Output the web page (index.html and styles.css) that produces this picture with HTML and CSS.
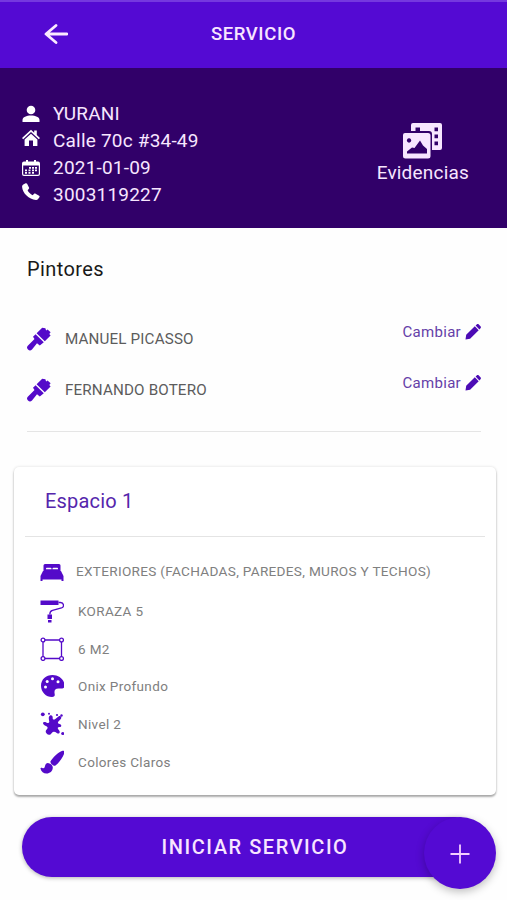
FILE: index.html
```html
<!DOCTYPE html>
<html lang="es">
<head>
    <meta charset="UTF-8">
    <meta name="viewport" content="width=device-width, initial-scale=1.0">
    <title>Servicio</title>
    <link rel="stylesheet" href="styles.css">
</head>
<body>
    <header class="toolbar">
        <svg class="back" viewBox="0 0 24 20"><path d="M12 1.500L2 10l10 8.500M2.500 10H23"/></svg>
        <h1>SERVICIO</h1>
    </header>

    <section class="client">
        <ul class="client-data">
            <li>
                <svg viewBox="0 0 18 18"><circle cx="9" cy="5" r="4.300"/><path d="M.5 17v-2c0-3 4-4.500 8.500-4.500s8.500 1.500 8.500 4.500v2z"/></svg>
                <span>YURANI</span>
            </li>
            <li>
                <svg class="up" viewBox="0 0 18 18"><path d="M0 9L9 .8l3.200 2.900V1.500h2.600V6L18 9l-1.200 1.200L9 3.100l-7.800 7.100z"/><path d="M2.600 10.500L9 4.700l6.400 5.800V17H11v-5.500H7V17H2.600z"/></svg>
                <span>Calle 70c #34-49</span>
            </li>
            <li>
                <svg viewBox="0 0 18 18"><path fill-rule="evenodd" d="M2 2.500h2V1h2v1.500h6V1h2v1.500h2a2 2 0 0 1 2 2V15a2 2 0 0 1-2 2H2a2 2 0 0 1-2-2V4.500a2 2 0 0 1 2-2zM1.200 6.500V15a.8.8 0 0 0 .8.800h14a.8.8 0 0 0 .8-.8V6.500z"/><path d="M7 8h2v1.700H7zM10 8h2v1.700h-2zM13 8h2v1.700h-2zM3 10.500h2v1.700H3zM6.500 10.500h2v1.700h-2zM10 10.500h2v1.700h-2zM13 10.500h2v1.700h-2zM3 13h2v1.700H3zM6.500 13h2v1.700h-2zM10 13h2v1.700h-2z"/></svg>
                <span>2021-01-09</span>
            </li>
            <li>
                <svg class="up" viewBox="0 0 18 18"><path d="M1.300 1.500L3.600.3c.6-.3 1.200-.1 1.500.5L7 4.500c.3.600.2 1.200-.3 1.600L5.600 7.300c.8 2 2.900 4 5 4.900l1.300-1.300c.5-.4 1.100-.5 1.700-.1l3.500 2c.6.400.7 1 .3 1.500l-1.500 2c-.5.600-1.200.8-2 .7C7 16.300.5 10 .1 3.900 0 2.800.5 2 1.300 1.500z"/></svg>
                <span>3003119227</span>
            </li>
        </ul>
        <div class="evidence">
            <svg viewBox="0 0 39 36">
                <path fill-rule="evenodd" d="M10 0h27a2 2 0 0 1 2 2v23a2 2 0 0 1-2 2h-8V11a3 3 0 0 0-3-3h-9V4.500h-4.500V8H8V2a2 2 0 0 1 2-2zM31.500 4.500v3.800H35V4.500zM31.500 11.500v3.800H35v-3.800zM31.500 18.500v3.800H35v-3.800z"/>
                <path fill-rule="evenodd" d="M2 10h23a2.500 2.500 0 0 1 2.500 2.500V33a2.500 2.500 0 0 1-2.500 2.500H2.500A2.500 2.500 0 0 1 0 33V12a2 2 0 0 1 2-2zM6 15.300a2.200 2.200 0 1 0 .1 0zM4 30.500h20V26l-4-3.500-3-5-5.500 7.500-2.500-.5-5 4z"/>
            </svg>
            <span>Evidencias</span>
        </div>
    </section>

    <section class="painters">
        <h2>Pintores</h2>
        <div class="painter">
            <svg class="brush" viewBox="0 0 24 24"><path d="M15.200.8L9.600 6.200l8.200 8 5.800-5.700-1.300-1.500 1.300-1.700-3-2.800-1.500 1-.7-2.300zM8.600 7.200L6 9.700l1.500 2.400-6.500 6.300a2.800 2.800 0 1 0 4 4L10 16.200l2.800 2.300 4-3.300z"/></svg>
            <span class="name">MANUEL PICASSO</span>
            <a class="change">Cambiar <svg viewBox="0 0 16 16"><path d="M.5 15.500l.7-4.800L9.800 2.300l3.900 3.900-8.600 8.500zM10.600 1.500L11.700.5c.6-.6 1.500-.6 2.100 0l1.700 1.700c.6.600.6 1.500 0 2.100l-1.100 1.100z"/></svg></a>
        </div>
        <div class="painter">
            <svg class="brush" viewBox="0 0 24 24"><path d="M15.200.8L9.600 6.200l8.200 8 5.800-5.700-1.300-1.500 1.300-1.700-3-2.800-1.500 1-.7-2.300zM8.600 7.200L6 9.700l1.500 2.400-6.500 6.300a2.800 2.800 0 1 0 4 4L10 16.200l2.800 2.300 4-3.300z"/></svg>
            <span class="name">FERNANDO BOTERO</span>
            <a class="change">Cambiar <svg viewBox="0 0 16 16"><path d="M.5 15.500l.7-4.800L9.800 2.300l3.900 3.900-8.600 8.500zM10.600 1.500L11.700.5c.6-.6 1.500-.6 2.100 0l1.700 1.700c.6.600.6 1.500 0 2.100l-1.100 1.100z"/></svg></a>
        </div>
    </section>

    <section class="card">
        <h3>Espacio 1</h3>
        <ul class="details">
            <li class="place">
                <svg viewBox="0 0 24 24"><path d="M5 4h14a1.500 1.500 0 0 1 1.500 1.500V11h-17V5.500A1.500 1.500 0 0 1 5 4zM3 11h18l2.500 5v5h-2v-1.500h-19V21h-2v-5z"/><path class="hole" d="M6 9.200v-.6c0-.6.500-.8 1-.8h3.500c.6 0 1 .3 1 .8v.6zM12.500 9.200v-.6c0-.5.400-.8 1-.8H17c.6 0 1 .2 1 .8v.6z"/></svg>
                <span>EXTERIORES (FACHADAS, PAREDES, MUROS Y TECHOS)</span>
            </li>
            <li>
                <svg viewBox="0 0 24 24"><path d="M.5 1.500h18V6H.5zM7.500 15.500H12V20H7.500zM8 21h3.500v2.500H8z"/><path class="line" d="M18.500 3.500h2c3.500 0 4 4.500 1 5.500l-9 2.300c-2 .5-2.700 1.200-2.700 4.200"/></svg>
                <span>KORAZA 5</span>
            </li>
            <li>
                <svg viewBox="0 0 24 24"><path class="line" d="M3 5v15M5 3h14M21.500 5v15M5 21.500h14"/><g class="line"><circle cx="3" cy="3" r="1.900"/><circle cx="21.500" cy="3" r="1.900"/><circle cx="3" cy="21.500" r="1.900"/><circle cx="21.500" cy="21.500" r="1.900"/></g></svg>
                <span>6 M2</span>
            </li>
            <li>
                <svg viewBox="0 0 24 24"><path d="M12.500 1C6 1 1 5.500 1 11.700 1 18 6 23 12 23c2.800 0 3-1.500 2.600-3.500-.5-3 .4-5 3.900-5h3c2 0 3-.8 3-3C24.500 5.500 19 1 12.500 1z"/><g class="hole"><circle cx="5.500" cy="13" r="1.500"/><circle cx="7.200" cy="7.500" r="1.500"/><circle cx="12.500" cy="4.800" r="1.500"/><circle cx="18" cy="7.800" r="1.500"/></g></svg>
                <span>Onix Profundo</span>
            </li>
            <li>
                <svg viewBox="0 0 24 24"><path d="M10 3.500c1.700-.7 3 .8 2.700 2.500-.2 1.500 1.300 2.200 2.600 1l3.200-2.600c2-1.300 3.800.8 2.300 2.500l-2.600 2.900c-1 1.500.5 2 1.900 2.500 1.700.6 1.700 2.800-.5 2.800-2.200.1-2.300 1.200-1 2.700 2.500 2.500.5 4.900-1.800 3.200-2-1.500-3.800-1.600-5 0-1.500 2.300-3.600 2.500-5.200.5-1.600-2-.8-3.200.5-4.500 1.300-1.500.2-2.200-1.200-2.900-2-1-3.700-2.400-2.500-3.800 1-1 2.700.1 4.100.6 1.500.4 2-.5 1.700-1.800-.5-2.300-.9-4.800.8-5.600z"/><circle cx="2.800" cy="2.300" r="1.900"/><circle cx="9" cy="1.800" r="1"/><circle cx="17" cy="3" r="1.100"/><circle cx="21.500" cy="3.500" r="1.200"/><circle cx="22.700" cy="21.500" r="1.500"/></svg>
                <span>Nivel 2</span>
            </li>
            <li>
                <svg viewBox="0 0 24 24"><path d="M22.500.8c1.600-.5 2.400.8 1.700 2.800-1.500 4-4.800 9.300-9.100 12.200-1.500.5-5-2.200-4.700-4.200 2.300-4 7.600-9.300 12.100-10.800zM8.500 13.200c2.400.4 4.300 2 4.300 4.300 0 3.800-3 6-6.300 6-3 0-5.200-1.500-6-4.700-.2-1 1-1.200 1.800-.8 1.800.8 2.200-.2 2.700-2 .5-2 1.800-3.200 3.500-2.800z"/></svg>
                <span>Colores Claros</span>
            </li>
        </ul>
    </section>

    <div class="actions">
        <button class="start">INICIAR SERVICIO</button>
        <button class="fab" aria-label="Agregar"><svg viewBox="0 0 20 20"><path d="M10 .5v19M.5 10h19"/></svg></button>
    </div>
</body>
</html>
```
FILE: styles.css
```css
* {
    box-sizing: border-box;
}

body {
    margin: 0;
    height: 900px;
    overflow: hidden;
    background: #fefefe;
    font-family: Roboto, sans-serif;
}

h1, h2, h3, ul {
    margin: 0;
    padding: 0;
    font-weight: 400;
    list-style: none;
}

svg {
    display: block;
    flex: none;
    fill: currentColor;
}

.toolbar {
    display: grid;
    grid-template-columns: 44px 1fr 44px;
    align-items: center;
    height: 68px;
    padding-bottom: 2px;
    background: #540ad3;
    color: #f8e5ff;
    border-top: 2px solid #7538df;
}

.back {
    width: 24px;
    height: 20px;
    justify-self: end;
    margin-right: -24px;
    fill: none;
    stroke: #fbeaff;
    stroke-width: 2.8;
    stroke-linecap: round;
    stroke-linejoin: round;
}

.toolbar h1 {
    text-align: center;
    font-size: 18.5px;
    font-weight: 500;
    letter-spacing: 0.6px;
}

.client {
    display: flex;
    justify-content: space-between;
    height: 160px;
    padding: 32px 38px 0 22px;
    background: #310069;
    color: #f7e6ff;
    font-size: 19px;
}

.client-data li {
    display: flex;
    align-items: center;
    gap: 13px;
    height: 27px;
    letter-spacing: 0.2px;
}

.client-data svg {
    width: 18px;
    height: 18px;
    color: #fff;
}

.client-data .up {
    margin-bottom: 6px;
}

.evidence {
    display: flex;
    flex-direction: column;
    align-items: center;
    padding-top: 23px;
    letter-spacing: 0.2px;
}

.evidence svg {
    width: 39px;
    height: 36px;
    margin-bottom: 2px;
}

.painters {
    margin: 0 26px 0 27px;
    height: 204px;
    padding-top: 29px;
    border-bottom: 1px solid #e5e5e5;
}

.painters h2 {
    height: 56px;
    font-size: 20px;
    line-height: 25px;
    color: #191919;
    letter-spacing: 0.4px;
}

.painter {
    display: flex;
    align-items: center;
    height: 51px;
}

.brush {
    width: 24px;
    height: 24px;
    margin-right: 14px;
    color: #540ac9;
}

.name {
    font-size: 15.2px;
    color: #5c5c5c;
    letter-spacing: 0.15px;
}

.change {
    display: flex;
    align-items: center;
    gap: 4px;
    margin: 0 0 13px auto;
    font-size: 15px;
    color: #6540a8;
    letter-spacing: 0.3px;
}

.change svg {
    width: 16px;
    height: 16px;
    color: #4c0bb5;
}

.card {
    margin: 35px 11px 0 14px;
    height: 328px;
    border-radius: 5px;
    background: #fff;
    box-shadow: 0 2px 2px rgba(0, 0, 0, 0.3), 0 0 3px rgba(0, 0, 0, 0.14);
}

.card h3 {
    height: 70px;
    margin: 0 11px;
    padding: 22px 20px 0;
    border-bottom: 1px solid #e4e4e4;
    font-size: 20px;
    line-height: 25px;
    color: #5526ac;
    letter-spacing: 0.2px;
}

.details {
    padding: 15px 0 0 26px;
}

.details li {
    display: flex;
    align-items: center;
    gap: 14px;
    height: 37.7px;
    font-size: 13.5px;
    color: #808080;
    letter-spacing: 0.35px;
}

.details .place {
    gap: 12px;
    height: 40px;
    font-size: 13.6px;
    letter-spacing: 0.3px;
}

.place span {
    margin-bottom: 2px;
}

.details svg {
    width: 24px;
    height: 24px;
    color: #540ac9;
}

.details .hole {
    fill: #fff;
}

.details .line {
    fill: none;
    stroke: currentColor;
    stroke-width: 1.3;
}

.actions {
    position: relative;
    margin: 22px 22px 0;
}

.start {
    display: block;
    width: 100%;
    height: 60px;
    padding: 0 0 0 3px;
    border: none;
    border-radius: 30px;
    background: #540ad3;
    color: #f8e5ff;
    font: 500 20px Roboto, sans-serif;
    letter-spacing: 1.55px;
    box-shadow: 0 1px 4px rgba(0, 0, 0, 0.3);
}

/* floating button over the end of the main one */
.fab {
    position: absolute;
    top: 0;
    right: -11px;
    display: flex;
    align-items: center;
    justify-content: center;
    width: 72px;
    height: 72px;
    padding-top: 3px;
    border: none;
    border-radius: 50%;
    background: #540ad3;
    box-shadow: 0 3px 8px rgba(0, 0, 0, 0.25);
}

.fab svg {
    width: 20px;
    height: 20px;
    stroke: #f4cfff;
    stroke-width: 1.8;
}
```
